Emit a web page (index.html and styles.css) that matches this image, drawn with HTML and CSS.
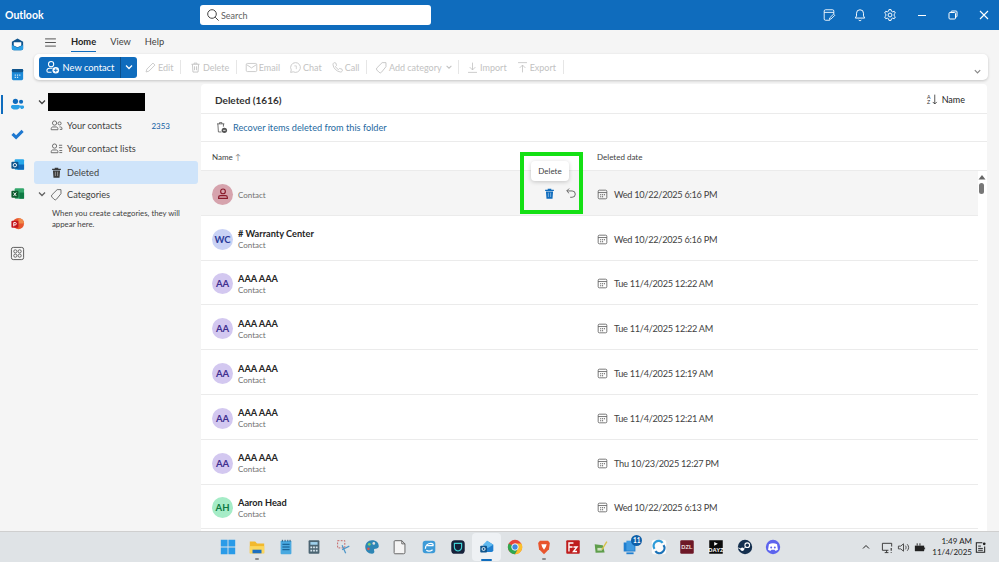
FILE: index.html
```html
<!DOCTYPE html>
<html lang="en">
<head>
    <meta charset="UTF-8">
    <title>Outlook</title>
    <link rel="stylesheet" href="styles.css">
</head>
<body>
    <svg class="sprite" width="0" height="0">
        <symbol id="trash" viewBox="0 0 16 16"><path d="M3 4h10M6.2 4V2.6h3.6V4M4.2 4l.7 9.6h6.2l.7-9.6M6.8 6.5v4.8M9.2 6.5v4.8" fill="none" stroke="currentColor" stroke-width="1.1"/></symbol>
        <symbol id="trash-solid" viewBox="0 0 16 16"><path d="M2.6 3.4h3.2V2h4.4v1.4h3.2v1.4H2.6zM3.6 5.4h8.8l-.7 9H4.3z" fill="currentColor"/><path d="M6.6 7v5.4M9.4 7v5.4" stroke="#fff" stroke-opacity=".55" stroke-width="1"/></symbol>
        <symbol id="people" viewBox="0 0 16 16"><g fill="none" stroke="currentColor" stroke-width="1.1"><circle cx="5.6" cy="5" r="2.6"/><path d="M1.5 13.2v-1.4c0-1.2 1-2 2-2h4.2c1 0 2 .8 2 2v1.4z"/><circle cx="11.8" cy="5.4" r="1.9"/><path d="M11.6 9.8h1.6c.9 0 1.5.7 1.5 1.5v1.5h-2.6"/></g></symbol>
        <symbol id="people-list" viewBox="0 0 16 16"><g fill="none" stroke="currentColor" stroke-width="1.1"><circle cx="5.6" cy="5" r="2.6"/><path d="M1.5 13.2v-1.4c0-1.2 1-2 2-2h4.2c1 0 2 .8 2 2v1.4z"/><path d="M11 4h4M11 7h4M11.5 10.500h3.500M11.5 13h3.500"/></g></symbol>
        <symbol id="tag" viewBox="0 0 16 16"><path d="M8.800 2h4.700v5L8 13.800a2 2 0 0 1-3 .1L2.400 11.200a2 2 0 0 1 0-2.800z" fill="none" stroke="currentColor" stroke-width="1.1"/></symbol>
        <symbol id="chev" viewBox="0 0 10 10"><path d="M2 3.500 5 6.500l3-3" fill="none" stroke="currentColor" stroke-width="1.300"/></symbol>
        <symbol id="cal" viewBox="0 0 14 14"><rect x="1.500" y="1.500" width="11" height="11" rx="1.500" fill="none" stroke="currentColor"/><path d="M1.500 4.500h11" stroke="currentColor"/><path d="M4 6.700h1.400v1.400H4zM6.400 6.700h1.400v1.400H6.400zM8.800 6.700h1.400v1.400H8.800zM4 9.200h1.400v1.400H4zM6.400 9.200h1.400v1.400H6.400z" fill="currentColor"/></symbol>
    </svg>

    <div class="app">
        <header class="topbar">
            <div class="brand">Outlook</div>
            <div class="search">
                <svg class="search-icon" viewBox="0 0 14 14"><circle cx="6" cy="6" r="4.300" fill="none" stroke="#444" stroke-width="1"/><path d="M9.200 9.200 12.600 12.600" stroke="#444" stroke-width="1"/></svg>
                <span>Search</span>
            </div>
            <div class="top-actions">
                <svg class="top-icon" viewBox="0 0 16 16"><g fill="none" stroke="#fff" stroke-width="1"><path d="M9 14H4a1.500 1.500 0 0 1-1.500-1.500V3.500A1.500 1.500 0 0 1 4 2h8a1.500 1.500 0 0 1 1.500 1.500V7"/><path d="M2.500 5h11"/><path d="m8.500 13 .4-1.800 4.300-4.200 1.400 1.400-4.300 4.200z"/></g></svg>
                <svg class="top-icon" viewBox="0 0 16 16"><g fill="none" stroke="#fff" stroke-width="1.100"><path d="M8 2a4 4 0 0 0-4 4v3l-1.300 2.500h10.600L12 9V6a4 4 0 0 0-4-4z"/><path d="M6.500 13.500a1.600 1.600 0 0 0 3 0"/></g></svg>
                <svg class="top-icon" viewBox="0 0 16 16"><g fill="none" stroke="#fff" stroke-width="1.100"><circle cx="8" cy="8" r="2.200"/><path d="M6.800 1.800h2.400l.4 1.800 1.500.8 1.800-.6 1.200 2-1.400 1.300v1.800l1.400 1.300-1.200 2-1.800-.6-1.500.8-.4 1.800H6.800l-.4-1.800-1.500-.8-1.800.6-1.200-2 1.400-1.300V7.100L1.900 5.800l1.200-2 1.800.6 1.500-.8z"/></g></svg>
                <svg class="win-icon win-first" viewBox="0 0 12 12"><path d="M2 6.500h8" stroke="#fff" stroke-width="1"/></svg>
                <svg class="win-icon" viewBox="0 0 12 12"><g fill="none" stroke="#fff" stroke-width="1"><rect x="2" y="3.500" width="6.500" height="6.500" rx="1"/><path d="M4 3.500V3a1 1 0 0 1 1-1h4a1 1 0 0 1 1 1v4a1 1 0 0 1-1 1h-.5"/></g></svg>
                <svg class="win-icon" viewBox="0 0 12 12"><path d="m2 2 8 8M10 2l-8 8" stroke="#fff" stroke-width="1.100"/></svg>
            </div>
        </header>

        <div class="workspace">
            <nav class="rail">
                <div class="rail-item">
                    <svg viewBox="0 0 16 16"><path d="M8 1.500 14 5v7a2 2 0 0 1-2 2H4a2 2 0 0 1-2-2V5z" fill="#0f548c"/><path d="M4 5.500h8v3.500L8 11 4 9z" fill="#fff"/><path d="M2 8.500 8 11.500l6-3V12a2 2 0 0 1-2 2H4a2 2 0 0 1-2-2z" fill="#2aa0e6"/></svg>
                </div>
                <div class="rail-item">
                    <svg viewBox="0 0 16 16"><rect x="2" y="2" width="12" height="12" rx="1.500" fill="#1c8ad8"/><rect x="2" y="2" width="12" height="3.500" rx="1.200" fill="#0f548c"/><path d="M5 8h1.300v1.300H5zM7.400 8h1.300v1.300H7.400zM9.800 8h1.300v1.300H9.800zM5 10.500h1.300v1.300H5zM7.400 10.500h1.300v1.300H7.400z" fill="#cfe6f8"/></svg>
                </div>
                <div class="rail-item rail-active">
                    <svg viewBox="0 0 16 16"><circle cx="5.800" cy="4.600" r="2.800" fill="#0f6cbd"/><circle cx="11.800" cy="5" r="2.200" fill="#0f6cbd"/><path d="M9.500 9h4c1 0 1.500.7 1.500 1.600 0 1.500-1.300 2.200-3.200 2.200z" fill="#2aa0e6"/><path d="M1 10.300C1 9 2 8.500 3 8.500h5.600c1 0 2 .6 2 1.800 0 2-2 3-4.800 3S1 12.300 1 10.300z" fill="#2aa0e6"/></svg>
                </div>
                <div class="rail-item">
                    <svg viewBox="0 0 16 16"><path d="m1.500 8.500 2.400-2.400L6.500 8.700l5.800-5.800 2.300 2.300-8.100 8.200z" fill="#1e78d0"/></svg>
                </div>
                <div class="rail-item">
                    <svg viewBox="0 0 16 16"><rect x="5" y="2.500" width="10" height="11" rx="1" fill="#28a8ea"/><rect x="8" y="8" width="7" height="5.500" fill="#0f6cbd"/><rect x="1.500" y="5" width="7.500" height="7.500" rx="1" fill="#0f548c"/><circle cx="5.200" cy="8.700" r="1.800" fill="none" stroke="#fff"/></svg>
                </div>
                <div class="rail-item">
                    <svg viewBox="0 0 16 16"><rect x="5" y="2.500" width="10" height="11" rx="1" fill="#33a66b"/><rect x="10" y="7" width="5" height="6.500" fill="#0e7a43"/><rect x="1.500" y="5" width="7.500" height="7.500" rx="1" fill="#0e5c2f"/><path d="m3.700 6.900 3 3.800M6.700 6.900l-3 3.800" stroke="#fff"/></svg>
                </div>
                <div class="rail-item">
                    <svg viewBox="0 0 16 16"><circle cx="9" cy="8" r="6" fill="#e8562f"/><path d="M9 2a6 6 0 0 1 6 6H9z" fill="#f08a4b"/><rect x="1.500" y="5" width="7.500" height="7.500" rx="1" fill="#c4161c"/><path d="M4 11V7h1.500a1.200 1.200 0 0 1 0 2.500H4" fill="none" stroke="#fff"/></svg>
                </div>
                <div class="rail-item">
                    <svg viewBox="0 0 16 16"><rect x="1.500" y="1.500" width="13" height="13" rx="2" fill="none" stroke="#555"/><g fill="none" stroke="#555" stroke-width=".9"><circle cx="5.700" cy="5.700" r="1.700"/><circle cx="10.300" cy="5.700" r="1.700"/><circle cx="5.700" cy="10.300" r="1.700"/><circle cx="10.300" cy="10.300" r="1.700"/></g></svg>
                </div>
            </nav>

            <div class="content">
                <div class="tabs">
                    <svg class="hamburger" viewBox="0 0 12 10"><path d="M0 1h12M0 5h12M0 9h12" stroke="#444" stroke-width="1"/></svg>
                    <span class="tab tab-active">Home</span>
                    <span class="tab">View</span>
                    <span class="tab">Help</span>
                </div>

                <div class="ribbon">
                    <div class="split-btn">
                        <span class="split-main">
                            <svg class="ico-16" viewBox="0 0 16 16"><g fill="none" stroke="#fff" stroke-width="1.100"><circle cx="6.500" cy="4.500" r="2.800"/><path d="M7 13H3.500A1.500 1.500 0 0 1 2 11.500c0-2 1.500-2.800 3-2.800h3"/></g><circle cx="11.500" cy="11" r="3.500" fill="#fff"/><path d="M11.500 9v4M9.500 11h4" stroke="#0f6cbd"/></svg>
                            New contact
                        </span>
                        <span class="split-arrow"><svg class="ico-10" viewBox="0 0 10 10"><use href="#chev"/></svg></span>
                    </div>
                    <span class="rb-btn">
                        <svg class="ico-14" viewBox="0 0 16 16"><path d="M2.500 13.500 3.500 10l7.500-7.500 2.500 2.500L6 12.500z" fill="none" stroke="currentColor"/></svg>Edit
                    </span>
                    <i class="rb-sep"></i>
                    <span class="rb-btn"><svg class="ico-14"><use href="#trash"/></svg>Delete</span>
                    <i class="rb-sep"></i>
                    <span class="rb-btn">
                        <svg class="ico-14" viewBox="0 0 16 16"><rect x="1.500" y="3" width="13" height="10" rx="1.500" fill="none" stroke="currentColor"/><path d="m2 4.500 6 4 6-4" fill="none" stroke="currentColor"/></svg>Email
                    </span>
                    <span class="rb-btn">
                        <svg class="ico-14" viewBox="0 0 16 16"><path d="M8 2a6 6 0 1 1-2.800 11.300L2 14l.8-3A6 6 0 0 1 8 2z" fill="none" stroke="currentColor"/><path d="M6.500 6h2.500v4" fill="none" stroke="currentColor" stroke-width=".8"/></svg>Chat
                    </span>
                    <span class="rb-btn">
                        <svg class="ico-14" viewBox="0 0 16 16"><path d="M4 2 6 2.500l.8 3-1.300 1.300a8 8 0 0 0 3.700 3.700l1.300-1.300 3 .8.500 2c-.3 1-1.500 1.800-2.700 1.500C6.500 12.500 3 9 2.500 4.700 2.300 3.500 3 2.300 4 2z" fill="none" stroke="currentColor"/></svg>Call
                    </span>
                    <i class="rb-sep"></i>
                    <span class="rb-btn"><svg class="ico-14"><use href="#tag"/></svg>Add category<svg class="ico-8" viewBox="0 0 10 10"><use href="#chev"/></svg></span>
                    <i class="rb-sep"></i>
                    <span class="rb-btn">
                        <svg class="ico-14" viewBox="0 0 16 16"><path d="M8 2v9M4.500 7.500 8 11l3.500-3.500M2.500 14h11" fill="none" stroke="currentColor"/></svg>Import
                    </span>
                    <span class="rb-btn">
                        <svg class="ico-14" viewBox="0 0 16 16"><path d="M8 14V5M4.500 8.500 8 5l3.500 3.500M2.500 2h11" fill="none" stroke="currentColor"/></svg>Export
                    </span>
                    <i class="rb-sep"></i>
                    <svg class="ribbon-more" viewBox="0 0 10 10"><use href="#chev"/></svg>
                </div>

                <div class="panes">
                    <aside class="folders">
                        <div class="account">
                            <svg class="ico-10" viewBox="0 0 10 10"><use href="#chev"/></svg>
                            <div class="redacted"></div>
                        </div>
                        <div class="folder">
                            <svg class="ico-14"><use href="#people"/></svg>
                            <span class="folder-name">Your contacts</span>
                            <span class="folder-count">2353</span>
                        </div>
                        <div class="folder">
                            <svg class="ico-14"><use href="#people-list"/></svg>
                            <span class="folder-name">Your contact lists</span>
                        </div>
                        <div class="folder folder-active">
                            <svg class="ico-14"><use href="#trash-solid"/></svg>
                            <span class="folder-name">Deleted</span>
                        </div>
                        <div class="categories">
                            <svg class="ico-10" viewBox="0 0 10 10"><use href="#chev"/></svg>
                            <svg class="ico-14"><use href="#tag"/></svg>
                            <span class="folder-name">Categories</span>
                        </div>
                        <p class="hint">When you create categories, they will appear here.</p>
                    </aside>

                    <main class="list">
                        <div class="list-head">
                            <span class="list-title">Deleted (1616)</span>
                            <span class="sort">
                                <svg class="ico-14" viewBox="0 0 16 16"><path d="M12 2v11.500M9.500 11l2.500 2.500 2.500-2.500" fill="none" stroke="#333"/><text x="2.500" y="7" font-size="6.500" font-family="Liberation Sans, sans-serif" fill="#333">A</text><text x="2.500" y="14" font-size="6.500" font-family="Liberation Sans, sans-serif" fill="#333">Z</text></svg>
                                Name
                            </span>
                        </div>
                        <div class="recover">
                            <svg class="ico-14" viewBox="0 0 16 16"><path d="M2.500 3.500h9M5.500 3.500V2h3v1.500M3.500 3.500l.7 10H8" fill="none" stroke="#555"/><path d="M10.500 3.500 10.300 7" fill="none" stroke="#555"/><circle cx="11.500" cy="11.500" r="3.300" fill="#555"/><path d="M10 11.500h3" stroke="#fff"/></svg>
                            <span>Recover items deleted from this folder</span>
                        </div>
                        <div class="cols">
                            <span class="col-name">Name <b class="sort-arrow">↑</b></span>
                            <span class="col-date">Deleted date</span>
                        </div>

                        <div class="row row-hover">
                            <div class="avatar av-red">
                                <svg viewBox="0 0 16 16"><circle cx="8" cy="5" r="2.700" fill="none" stroke="#8a1a2b" stroke-width="1.300"/><path d="M3 13v-1c0-1.300 1-2.200 2.200-2.200h5.600c1.200 0 2.200.9 2.200 2.200v1z" fill="none" stroke="#8a1a2b" stroke-width="1.300"/></svg>
                            </div>
                            <div class="who"><span class="kind">Contact</span></div>
                            <div class="row-actions">
                                <svg class="act-delete"><use href="#trash-solid"/></svg>
                                <svg class="act-undo" viewBox="0 0 14 14"><path d="M4.800 1.800 2 4.600l2.800 2.800M2.300 4.600h6a3.500 3.500 0 0 1 0 7.400H6" fill="none" stroke="#555"/></svg>
                            </div>
                            <div class="when"><svg class="ico-12"><use href="#cal"/></svg>Wed 10/22/2025 6:16 PM</div>
                        </div>
                        <div class="row">
                            <div class="avatar av-blue">WC</div>
                            <div class="who"><span class="person"># Warranty Center</span><span class="kind">Contact</span></div>
                            <div class="when"><svg class="ico-12"><use href="#cal"/></svg>Wed 10/22/2025 6:16 PM</div>
                        </div>
                        <div class="row">
                            <div class="avatar av-purple">AA</div>
                            <div class="who"><span class="person">AAA AAA</span><span class="kind">Contact</span></div>
                            <div class="when"><svg class="ico-12"><use href="#cal"/></svg>Tue 11/4/2025 12:22 AM</div>
                        </div>
                        <div class="row">
                            <div class="avatar av-purple">AA</div>
                            <div class="who"><span class="person">AAA AAA</span><span class="kind">Contact</span></div>
                            <div class="when"><svg class="ico-12"><use href="#cal"/></svg>Tue 11/4/2025 12:22 AM</div>
                        </div>
                        <div class="row">
                            <div class="avatar av-purple">AA</div>
                            <div class="who"><span class="person">AAA AAA</span><span class="kind">Contact</span></div>
                            <div class="when"><svg class="ico-12"><use href="#cal"/></svg>Tue 11/4/2025 12:19 AM</div>
                        </div>
                        <div class="row">
                            <div class="avatar av-purple">AA</div>
                            <div class="who"><span class="person">AAA AAA</span><span class="kind">Contact</span></div>
                            <div class="when"><svg class="ico-12"><use href="#cal"/></svg>Tue 11/4/2025 12:21 AM</div>
                        </div>
                        <div class="row">
                            <div class="avatar av-purple">AA</div>
                            <div class="who"><span class="person">AAA AAA</span><span class="kind">Contact</span></div>
                            <div class="when"><svg class="ico-12"><use href="#cal"/></svg>Thu 10/23/2025 12:27 PM</div>
                        </div>
                        <div class="row">
                            <div class="avatar av-green">AH</div>
                            <div class="who"><span class="person">Aaron Head</span><span class="kind">Contact</span></div>
                            <div class="when"><svg class="ico-12"><use href="#cal"/></svg>Wed 10/22/2025 6:13 PM</div>
                        </div>

                        <div class="scroller">
                            <svg class="scroll-up" viewBox="0 0 8 6"><path d="M4 1 7.500 5.500H.5z" fill="#666"/></svg>
                            <div class="scroll-thumb"></div>
                        </div>
                        <div class="highlight"></div>
                        <div class="tooltip">Delete</div>
                    </main>
                </div>
            </div>
        </div>

        <footer class="taskbar">
            <div class="task-icons">
                <span class="task"><svg viewBox="0 0 20 20"><path d="M2 2h7.500v7.500H2zM10.500 2H18v7.500h-7.500zM2 10.500h7.500V18H2zM10.500 10.500H18V18h-7.500z" fill="#2a9be8"/></svg></span>
                <span class="task task-open"><svg viewBox="0 0 20 20"><path d="M2 4h6l2 2h8v11H2z" fill="#f2b92d"/><path d="M2 9h16v8H2z" fill="#fcd75c"/><path d="M5 13h10v4H5z" fill="#1c6fc0"/></svg></span>
                <span class="task"><svg viewBox="0 0 20 20"><rect x="4" y="3" width="12" height="15" rx="1" fill="#49a9e0"/><path d="M6 7h8M6 10h8M6 13h8" stroke="#0b4f80"/><path d="M6 2v2M9 2v2M12 2v2M14.500 2v2" stroke="#24506f"/></svg></span>
                <span class="task"><svg viewBox="0 0 20 20"><rect x="4" y="2.500" width="12" height="15" rx="1" fill="#4b6472"/><rect x="6" y="4.500" width="8" height="3" fill="#9fd0ec"/><path d="M6 9.500h2v2H6zM9 9.500h2v2H9zM12 9.500h2v2h-2zM6 13h2v2H6zM9 13h2v2H9zM12 13h2v2h-2z" fill="#d8e6ee"/></svg></span>
                <span class="task"><svg viewBox="0 0 20 20"><path d="M4 3h8v8H4z" fill="none" stroke="#c45a5a" stroke-dasharray="2 1.500"/><path d="m9 8 4 9M17 9 9 13" stroke="#4d97c9" stroke-width="1.400" fill="none"/></svg></span>
                <span class="task"><svg viewBox="0 0 20 20"><path d="M10 2.500c5 0 7.500 3 7.500 6.500 0 3-3 3-4 3-1.500 0-1.500 1.500-1 2.500.6 1.300-.5 3-2.500 3C5.500 17.500 2.500 14 2.500 10S5.500 2.500 10 2.500z" fill="#2e86b5"/><circle cx="7" cy="7" r="1.500" fill="#7cd36a"/><circle cx="12" cy="6" r="1.500" fill="#e0e0e0"/><circle cx="6" cy="12" r="1.500" fill="#d8554f"/></svg></span>
                <span class="task"><svg viewBox="0 0 20 20"><path d="M4.500 3H12l3.500 3.500V16a1.500 1.500 0 0 1-1.500 1.500H4.500A1 1 0 0 1 3.500 16V4a1 1 0 0 1 1-1z" fill="#f4f4f4" stroke="#5a5a5a"/><path d="M12 3v3.500h3.500" fill="none" stroke="#5a5a5a"/></svg></span>
                <span class="task"><svg viewBox="0 0 20 20"><rect x="3" y="3" width="14" height="14" rx="3" fill="#3d9bd8"/><path d="M6 12c0-4 3-6 6-6 2 0 3 1 2.500 2.500H8M7 13.500c2 1.500 5 1 7-.5" fill="none" stroke="#fff" stroke-width="1.400"/></svg></span>
                <span class="task"><svg viewBox="0 0 20 20"><rect x="2.500" y="2.500" width="15" height="15" rx="4" fill="#16213a"/><path d="M6 6h8v4c0 2.500-2 4-4 4.500C8 14 6 12.500 6 10z" fill="none" stroke="#3fd0d4" stroke-width="1.300"/></svg></span>
                <span class="task task-current"><svg viewBox="0 0 20 20"><path d="M10 3 17 7.500v6a2 2 0 0 1-2 2H7z" fill="#1f7fd0"/><path d="M10 3 17 7.500 11 11 5 8z" fill="#5fb9f0"/><rect x="2.500" y="8.500" width="7.500" height="7.500" rx="1" fill="#0f548c"/><circle cx="6.200" cy="12.200" r="1.700" fill="none" stroke="#fff"/></svg></span>
                <span class="task"><svg viewBox="0 0 20 20"><circle cx="10" cy="10" r="8" fill="#e8453c"/><path d="M10 10 3.100 6A8 8 0 0 0 10 18l3.500-6z" fill="#2fa84f"/><path d="M10 6h7a8 8 0 0 1-7 12l3.500-6z" fill="#fbc02d"/><circle cx="10" cy="10" r="3.600" fill="#3f8ae0" stroke="#fff"/></svg></span>
                <span class="task task-open"><svg viewBox="0 0 20 20"><path d="M5.500 3h9l2 2.500-1 7L10 18l-5.500-5.500-1-7z" fill="#e8552d"/><path d="M7 7h6l-1 3-2 3-2-3z" fill="#fff"/></svg></span>
                <span class="task"><svg viewBox="0 0 20 20"><rect x="2.500" y="2.500" width="15" height="15" rx="1" fill="#bf1d1d"/><path d="M5.500 15V5.500h5M5.500 10h4M10.500 10h4l-4 5h4" fill="none" stroke="#fff" stroke-width="1.500"/></svg></span>
                <span class="task"><svg viewBox="0 0 20 20"><path d="M3 7l9 1 2 8-10 .5z" fill="#5f9e4c"/><path d="M6 11h5v3H6z" fill="#cfe3bf"/><path d="M11 13 16.500 4" stroke="#d8c24a" stroke-width="1.500"/></svg></span>
                <span class="task task-badge"><svg viewBox="0 0 20 20"><rect x="3" y="5" width="13" height="10" fill="#1f7fd0"/><rect x="6" y="3" width="9" height="11" fill="#3f9ae0"/><path d="M6 17h8" stroke="#1f7fd0" stroke-width="2"/></svg><b class="badge">11</b></span>
                <span class="task"><svg viewBox="0 0 20 20"><rect x="2" y="2" width="16" height="16" rx="3" fill="#fbfbfb"/><path d="M14 5.500A5.500 5.500 0 0 0 5 12" fill="none" stroke="#2d9bd8" stroke-width="2.500"/><path d="M6 14.500A5.500 5.500 0 0 0 15 8" fill="none" stroke="#1b72b8" stroke-width="2.500"/></svg></span>
                <span class="task"><svg viewBox="0 0 20 20"><rect x="2.500" y="2.500" width="15" height="15" rx="1.500" fill="#6d1827"/><text x="10" y="12.500" font-size="6.500" font-weight="700" text-anchor="middle" font-family="Liberation Sans, sans-serif" fill="#e8dcdc">DZL</text></svg></span>
                <span class="task"><svg viewBox="0 0 20 20"><rect x="2.500" y="2.500" width="15" height="15" fill="#0b0b0b"/><path d="M8 4.500 12 6.500 8 8.500z" fill="#fff"/><text x="10" y="15" font-size="6.500" font-weight="700" text-anchor="middle" font-family="Liberation Sans, sans-serif" fill="#fff">DAYZ</text></svg></span>
                <span class="task"><svg viewBox="0 0 20 20"><circle cx="10" cy="10" r="8" fill="#15304f"/><circle cx="12.500" cy="8" r="2.600" fill="none" stroke="#fff" stroke-width="1.200"/><circle cx="7" cy="12.500" r="2" fill="#fff"/><path d="m2.500 11 5 2 3-3" stroke="#fff" fill="none"/></svg></span>
                <span class="task"><svg viewBox="0 0 20 20"><circle cx="10" cy="10" r="8" fill="#5d64ee"/><path d="M5.500 7c3-1.400 6-1.400 9 0l1 6c-1 .8-2 1-3 1.200l-.7-1.200H8.200l-.7 1.200c-1-.2-2-.4-3-1.200z" fill="#fff"/><circle cx="8" cy="10.500" r="1.100" fill="#5d64ee"/><circle cx="12" cy="10.500" r="1.100" fill="#5d64ee"/></svg></span>
            </div>
            <div class="tray">
                <svg class="tray-chev" viewBox="0 0 10 10"><path d="M2 6.500 5 3.500l3 3" fill="none" stroke="#222" stroke-width="1"/></svg>
                <svg class="tray-ico" viewBox="0 0 14 14"><path d="M8 10H1.500V2.500h10V6M4 12.500h4M6 10v2.500" fill="none" stroke="#333"/><path d="M11 7.500v3M11 12v1" stroke="#333" stroke-width="1.200"/></svg>
                <svg class="tray-ico" viewBox="0 0 14 14"><path d="M1.500 5.500H4L7 3v8L4 8.500H1.500z" fill="none" stroke="#444"/><path d="M9 5c1 1 1 3 0 4M11 3.500c2 2 2 5 0 7" fill="none" stroke="#444"/></svg>
                <svg class="tray-ico" viewBox="0 0 14 14"><path d="M2 5h10v6H2z" fill="#222"/><path d="M4.500 5V2.500M7.500 5V2.500M12.500 7v2" stroke="#222"/></svg>
                <div class="clock"><span>1:49 AM</span><span>11/4/2025</span></div>
                <svg class="tray-ico tray-last" viewBox="0 0 14 14"><path d="M9 2H2.500v10h9V6" fill="none" stroke="#222" stroke-width="1.100"/><path d="M4.500 5.500h3M4.500 8h5M4.500 10h5" stroke="#222"/><circle cx="11" cy="3" r="1.500" fill="#222"/></svg>
            </div>
        </footer>
    </div>
</body>
</html>
```

FILE: styles.css
```css
* {
    box-sizing: border-box;
}

body {
    margin: 0;
    font-family: Lato, "Noto Sans", Arial, sans-serif;
    color: #242424;
    background: #f5f5f5;
    overflow: hidden;
}

svg {
    display: block;
    flex: none;
}

.sprite {
    position: absolute;
}

.app {
    height: 562px;
    display: flex;
    flex-direction: column;
}

/* top blue bar */
.topbar {
    height: 30px;
    flex: none;
    background: #0f6cbd;
    display: flex;
    align-items: center;
    color: #fff;
}

.brand {
    width: 200px;
    padding-left: 5px;
    font-size: 10.5px;
    font-weight: 700;
}

.search {
    width: 231px;
    height: 20px;
    background: #fff;
    border-radius: 3px;
    display: flex;
    align-items: center;
    gap: 1px;
    padding-left: 6px;
    font-size: 9px;
    color: #616161;
}

.search-icon {
    width: 14px;
    height: 14px;
}

.top-actions {
    margin-left: auto;
    display: flex;
    align-items: center;
}

.top-icon {
    width: 14px;
    height: 14px;
    margin-right: 16.5px;
}

.win-icon {
    width: 12px;
    height: 12px;
    margin-right: 19px;
}

.win-first {
    margin-left: 2.5px;
}

.win-icon:last-child {
    margin-right: 9px;
}

.workspace {
    flex: 1;
    display: flex;
    min-height: 0;
}

/* left app rail */
.rail {
    width: 34px;
    flex: none;
    display: flex;
    flex-direction: column;
}

.rail-item {
    height: 29.8px;
    display: flex;
    align-items: center;
    justify-content: center;
    position: relative;
}

.rail-item svg {
    width: 15px;
    height: 15px;
}

.rail-active::before {
    content: "";
    position: absolute;
    left: 1px;
    top: 5px;
    bottom: 5px;
    width: 1.5px;
    background: #0f6cbd;
}

.content {
    flex: 1;
    min-width: 0;
    display: flex;
    flex-direction: column;
}

.tabs {
    height: 24px;
    flex: none;
    display: flex;
    align-items: center;
    padding-left: 11px;
    font-size: 9.3px;
}

.hamburger {
    width: 11px;
    height: 9px;
    margin-right: 15px;
}

.tab {
    color: #424242;
    margin-right: 14px;
    line-height: 18px;
    position: relative;
}

.tab-active {
    font-weight: 700;
    color: #242424;
}

.tab-active::after {
    content: "";
    position: absolute;
    left: 0;
    right: 0;
    bottom: -1px;
    height: 1.5px;
    background: #0f6cbd;
}

/* ribbon */
.ribbon {
    height: 26px;
    flex: none;
    margin-right: 11px;
    background: #fff;
    border-radius: 5px;
    box-shadow: 0 1px 3px rgba(0, 0, 0, 0.2);
    display: flex;
    align-items: center;
    padding-left: 5px;
    font-size: 9px;
    color: #c2c2c2;
}

.split-btn {
    display: flex;
    height: 21px;
    border-radius: 3px;
    overflow: hidden;
    background: #0f6cbd;
    color: #fff;
    font-size: 9.3px;
    margin-right: 7px;
}

.split-main {
    width: 82px;
    display: flex;
    align-items: center;
    justify-content: center;
    gap: 3px;
    border-right: 1px solid #0b4f8a;
}

.split-arrow {
    width: 16px;
    display: flex;
    align-items: center;
    justify-content: center;
}

.ico-16 {
    width: 15px;
    height: 15px;
}

.ico-14 {
    width: 13px;
    height: 13px;
}

.ico-12 {
    width: 11px;
    height: 11px;
}

.ico-10 {
    width: 10px;
    height: 10px;
}

.ico-8 {
    width: 8px;
    height: 8px;
    margin-left: 2px;
    margin-right: -2px;
}

.rb-btn {
    display: flex;
    align-items: center;
    gap: 1px;
    margin-right: 7px;
}

.rb-btn + .rb-btn {
    margin-left: 2px;
}

.rb-sep {
    width: 1px;
    height: 14px;
    background: #e6e6e6;
    margin-right: 7.5px;
}

.ribbon-more {
    width: 9px;
    height: 9px;
    margin-left: auto;
    margin-right: 6px;
    margin-top: 8px;
    color: #888;
}

.panes {
    flex: 1;
    min-height: 0;
    display: flex;
    padding-top: 4px;
    padding-right: 12px;
}

/* folders */
.folders {
    width: 167px;
    flex: none;
    font-size: 9.2px;
    color: #424242;
}

.account {
    height: 18px;
    margin-top: 9px;
    margin-bottom: 3px;
    display: flex;
    align-items: center;
    gap: 1px;
    padding-left: 3px;
}

.redacted {
    width: 97px;
    height: 18px;
    background: #000;
}

.folder {
    height: 23.3px;
    display: flex;
    align-items: center;
    padding-left: 16px;
    gap: 4px;
    border-radius: 3px;
    margin-right: 3px;
}

.folder svg {
    color: #616161;
}

.folder-active {
    background: #cfe4fa;
}

.folder-active svg {
    color: #3b3b3b;
}

.folder-name {
    color: #424242;
}

.folder-count {
    margin-left: auto;
    margin-right: 28px;
    font-size: 8px;
    color: #115ea3;
}

.categories {
    height: 21px;
    display: flex;
    align-items: center;
    gap: 3px;
    padding-left: 3px;
}

.categories svg {
    color: #616161;
}

.categories .folder-name {
    margin-left: 1px;
}

.hint {
    margin: 3.5px 0 0 18px;
    width: 142px;
    font-size: 7.8px;
    line-height: 11px;
}

/* main list */
.list {
    flex: 1;
    min-width: 0;
    background: #fff;
    border-radius: 4px 4px 0 0;
    position: relative;
    overflow: hidden;
}

.list-head {
    height: 30px;
    padding: 2px 22px 0 14px;
    display: flex;
    align-items: center;
    justify-content: space-between;
    border-bottom: 1px solid #ebebeb;
}

.list-title {
    font-size: 10px;
    font-weight: 700;
    color: #333;
}

.sort {
    display: flex;
    align-items: center;
    gap: 4px;
    font-size: 9px;
}

.recover {
    height: 28px;
    display: flex;
    align-items: center;
    gap: 5px;
    padding-left: 14px;
    font-size: 9.2px;
    color: #1f6a9f;
    border-bottom: 1px solid #ebebeb;
}

.cols {
    height: 29px;
    padding: 2px 0 0 11px;
    display: flex;
    align-items: center;
    font-size: 8px;
    color: #424242;
    border-bottom: 1px solid #ebebeb;
}

.col-name {
    width: 385px;
}

.sort-arrow {
    font-weight: 400;
    color: #888;
}

.row {
    height: 44.8px;
    margin-right: 9px;
    display: flex;
    align-items: center;
    padding-left: 11px;
    padding-top: 3px;
    border-bottom: 1px solid #ebebeb;
    position: relative;
}

.row-hover {
    background: #f5f5f5;
}

.avatar {
    width: 21px;
    height: 21px;
    border-radius: 50%;
    flex: none;
    display: flex;
    align-items: center;
    justify-content: center;
    font-size: 9.5px;
    font-weight: 700;
}

.avatar svg {
    width: 14px;
    height: 14px;
}

.av-red {
    background: #d6a3ad;
}

.av-blue {
    background: #c9d2f5;
    color: #2a3a9a;
}

.av-purple {
    background: #d3c8f0;
    color: #3f2f8f;
}

.av-green {
    background: #a5ecc7;
    color: #0e7a43;
}

.who {
    width: 280px;
    margin-left: 5px;
    padding-top: 1px;
    display: flex;
    flex-direction: column;
}

.person {
    font-size: 9.2px;
    font-weight: 700;
    line-height: 11px;
    color: #242424;
}

.kind {
    font-size: 8px;
    line-height: 12px;
    color: #707070;
}

.row-actions {
    position: absolute;
    left: 342px;
    top: 15.5px;
    display: flex;
    align-items: center;
    gap: 9px;
}

.act-delete {
    width: 13px;
    height: 13px;
    color: #0f6cbd;
}

.act-undo {
    width: 12px;
    height: 12px;
}

.when {
    margin-left: 79px;
    display: flex;
    align-items: center;
    gap: 6px;
    font-size: 9.2px;
    letter-spacing: -0.28px;
    color: #424242;
}

.when svg {
    color: #555;
}

.scroller {
    position: absolute;
    right: 1px;
    top: 90px;
    width: 8px;
}

.scroll-up {
    width: 8px;
    height: 6px;
    margin-bottom: 3px;
}

.scroll-thumb {
    width: 5px;
    height: 11px;
    border-radius: 3px;
    background: #777;
    margin-left: 1px;
}

.highlight {
    position: absolute;
    left: 319px;
    top: 68px;
    width: 63px;
    height: 62px;
    border: 4px solid #14e014;
}

.tooltip {
    position: absolute;
    left: 330px;
    top: 77px;
    width: 38px;
    height: 20px;
    background: #fff;
    border-radius: 4px;
    box-shadow: 0 1px 4px rgba(0, 0, 0, 0.2);
    font-size: 8px;
    color: #424242;
    display: flex;
    align-items: center;
    justify-content: center;
}

/* windows taskbar */
.taskbar {
    height: 31px;
    flex: none;
    background: #dfe3e6;
    border-top: 1px solid #cfcfcf;
    display: flex;
    align-items: center;
}

.task-icons {
    display: flex;
    margin-left: 214px;
}

.task {
    width: 28.7px;
    height: 28px;
    display: flex;
    align-items: center;
    justify-content: center;
    position: relative;
    border-radius: 4px;
}

.task svg {
    width: 18px;
    height: 18px;
}

.task-current {
    background: #eef1f4;
}

.task-current::after {
    content: "";
    position: absolute;
    left: 9px;
    right: 9px;
    bottom: 0;
    height: 2.5px;
    border-radius: 2px;
    background: #0f6cbd;
}

.task-open::after {
    content: "";
    position: absolute;
    left: 12px;
    right: 12px;
    bottom: 1px;
    height: 2px;
    border-radius: 1px;
    background: #8a8a8a;
}

.badge {
    position: absolute;
    right: 2px;
    top: 2px;
    width: 11px;
    height: 11px;
    border-radius: 50%;
    background: #0f5fa8;
    color: #fff;
    font-size: 6.5px;
    font-weight: 700;
    line-height: 11px;
    text-align: center;
}

.tray {
    margin-left: auto;
    display: flex;
    align-items: center;
    padding-right: 12px;
}

.tray-chev {
    width: 10px;
    height: 10px;
    margin-right: 9.5px;
}

.tray-ico {
    width: 13px;
    height: 13px;
    margin-right: 3px;
}

.tray-last {
    margin-right: 0;
}

.clock {
    width: 40px;
    margin: 0 2px 0 3.5px;
    display: flex;
    flex-direction: column;
    align-items: flex-end;
    font-size: 8px;
    line-height: 11px;
    color: #222;
}
```
